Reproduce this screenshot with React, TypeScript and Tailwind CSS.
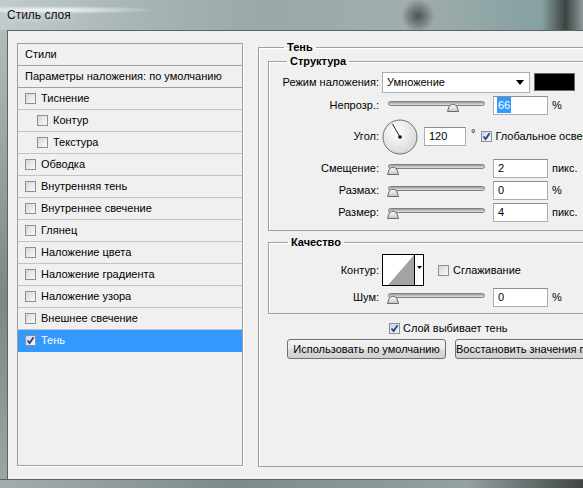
import React from 'react';

const font = "font-['Tahoma','Liberation_Sans',sans-serif]";

const Check = ({ checked }: { checked?: boolean }) => (
  <span
    className={`inline-flex h-[11px] w-[11px] shrink-0 items-center justify-center border border-[#8e8f8f] ${
      checked ? 'bg-[linear-gradient(135deg,#c9d6ea,#f4f7fb)]' : 'bg-[linear-gradient(135deg,#d6d6d6,#fbfbfb)]'
    }`}
  >
    {checked && (
      <svg width="9" height="9" viewBox="0 0 9 9">
        <path d="M1.5 4.5 L3.6 7 L7.6 1.2" fill="none" stroke="#2b3f7c" strokeWidth="1.8" />
      </svg>
    )}
  </span>
);

const Slider = ({ pos }: { pos: number }) => (
  <div className="relative h-[14px] w-[106px] shrink-0">
    <div className="absolute left-[6px] right-[3px] top-[3px] h-[5px] rounded-full border border-[#7f7f7f] bg-[linear-gradient(#9c9c9c,#e2e2e2)]" />
    <svg
      className="absolute top-[5px]"
      style={{ left: 5 + pos * 91 }}
      width="12"
      height="9"
      viewBox="0 0 12 9"
    >
      <defs>
        <linearGradient id="th" x1="0" y1="0" x2="0" y2="1">
          <stop offset="0" stopColor="#ffffff" />
          <stop offset="1" stopColor="#c4c4c4" />
        </linearGradient>
      </defs>
      <path d="M0.5 8.5 L2.2 3.2 Q6 -0.8 9.8 3.2 L11.5 8.5 Z" fill="url(#th)" stroke="#6b6b6b" />
    </svg>
  </div>
);

const Field = ({ value, w = 'w-[55px]', selected }: { value: string; w?: string; selected?: boolean }) => (
  <div className={`flex h-[19px] ${w} shrink-0 items-center border border-[#abadb3] border-t-[#8a8c92] bg-white pl-[3px]`}>
    <span className={selected ? 'bg-[#3399ff] px-[1px] text-white' : 'px-[1px]'}>{value}</span>
  </div>
);

const Label = ({ children }: { children: React.ReactNode }) => (
  <div className="w-[113px] shrink-0 pr-[3px] text-right">{children}</div>
);

const SliderRow = ({ label, pos, value, unit, selected }: { label: string; pos: number; value: string; unit: string; selected?: boolean }) => (
  <div className="flex h-[22px] items-center">
    <Label>{label}</Label>
    <Slider pos={pos} />
    <div className="ml-[5px]">
      <Field value={value} selected={selected} />
    </div>
    <span className="ml-[4px]">{unit}</span>
  </div>
);

const listItems = [
  { label: 'Тиснение' },
  { label: 'Контур', sub: true },
  { label: 'Текстура', sub: true },
  { label: 'Обводка' },
  { label: 'Внутренняя тень' },
  { label: 'Внутреннее свечение' },
  { label: 'Глянец' },
  { label: 'Наложение цвета' },
  { label: 'Наложение градиента' },
  { label: 'Наложение узора' },
  { label: 'Внешнее свечение' },
  { label: 'Тень', active: true },
];

export default function App() {
  return (
    <div className={`${font} flex h-[488px] w-[583px] flex-col overflow-hidden bg-[#8f9a9a] text-[11px] text-black`}>
      {/* title bar */}
      <div className="flex h-[30px] shrink-0 items-center bg-[radial-gradient(circle_at_418px_16px,#4d5252_0,#6f7777_7px,transparent_17px),radial-gradient(ellipse_at_50px_10px,#f4f7f7_0,transparent_110px),linear-gradient(90deg,#c2cbcb_0%,#a9b6b6_22%,#99a8a8_45%,#a1aeae_70%,#86a0a0_93%,#3c4242_97%,#8d9898_100%)] pl-[7px]">
        <span className="text-[12px] text-[#111] [text-shadow:0_0_6px_#fff]">Стиль слоя</span>
      </div>

      <div className="flex min-h-0 flex-1">
        {/* left frame */}
        <div className="w-[7px] shrink-0 bg-[linear-gradient(#b3bcbc,#7b8686_60%,#9aa5a5)]" />

        {/* client area */}
        <div className="flex min-w-0 flex-1 border-l border-t border-[#5b6363] bg-[#f0f0f0] pl-[9px] pt-[12px]">
          {/* styles list */}
          <div className="h-[423px] w-[226px] shrink-0 border border-[#a0a0a0] shadow-[1px_1px_0_#fff]">
            <div className="flex h-[22px] items-center border-b border-[#a0a0a0] pl-[7px]">Стили</div>
            <div className="flex h-[22px] items-center border-b border-[#a0a0a0] pl-[7px]">Параметры наложения: по умолчанию</div>
            {listItems.map((it) => (
              <div
                key={it.label}
                className={`flex h-[22px] items-center gap-[5px] border-b ${
                  it.active ? 'border-[#3399ff] bg-[#3399ff] text-white' : 'border-[#c4c4c4]'
                } ${it.sub ? 'pl-[19px]' : 'pl-[7px]'}`}
              >
                <Check checked={it.active} />
                <span>{it.label}</span>
              </div>
            ))}
          </div>

          {/* right side */}
          <fieldset className="ml-[15px] mt-[-3px] h-[427px] w-[360px] shrink-0 border border-[#a0a0a0] pl-[9px] shadow-[inset_1px_1px_0_#fff]">
            <legend className="ml-[16px] px-[3px] font-bold leading-[14px]">Тень</legend>

            <fieldset className="w-[340px] border border-[#a0a0a0] pb-[7px] shadow-[inset_1px_1px_0_#fff]">
              <legend className="ml-[18px] px-[3px] font-bold leading-[14px]">Структура</legend>

              <div className="mt-[3px] flex h-[22px] items-center">
                <Label>Режим наложения:</Label>
                <div className="flex h-[21px] w-[148px] shrink-0 items-center justify-between border border-[#abadb3] bg-white pl-[4px] pr-[5px]">
                  <span>Умножение</span>
                  <svg width="8" height="5" viewBox="0 0 8 5">
                    <path d="M0 0 H8 L4 5 Z" fill="#000" />
                  </svg>
                </div>
                <div className="ml-[4px] h-[18px] w-[41px] shrink-0 border border-[#6a6a6a] bg-black" />
              </div>

              <div className="mt-[1px]">
                <SliderRow label="Непрозр.:" pos={0.66} value="66" unit="%" selected />
              </div>

              <div className="flex h-[41px] items-center">
                <Label>Угол:</Label>
                <svg width="36" height="36" viewBox="0 0 36 36" className="shrink-0">
                  <defs>
                    <radialGradient id="dial" cx="0.4" cy="0.35" r="0.7">
                      <stop offset="0" stopColor="#ffffff" />
                      <stop offset="1" stopColor="#d6d6d6" />
                    </radialGradient>
                  </defs>
                  <circle cx="18" cy="18" r="17" fill="url(#dial)" stroke="#6f6f6f" />
                  <line x1="18" y1="18" x2="10.5" y2="5" stroke="#222" strokeWidth="1" />
                  <circle cx="18" cy="18" r="1.8" fill="#111" />
                </svg>
                <div className="ml-[6px]">
                  <Field value="120" w="w-[42px]" />
                </div>
                <span className="ml-[5px] -translate-y-[3px]">°</span>
                <div className="ml-[6px] flex items-center gap-[3px] whitespace-nowrap">
                  <Check checked />
                  <span>Глобальное освещение</span>
                </div>
              </div>

              <SliderRow label="Смещение:" pos={0} value="2" unit="пикс." />
              <SliderRow label="Размах:" pos={0} value="0" unit="%" />
              <SliderRow label="Размер:" pos={0} value="4" unit="пикс." />
            </fieldset>

            <fieldset className="mt-[4px] w-[340px] border border-[#a0a0a0] pb-[5px] shadow-[inset_1px_1px_0_#fff]">
              <legend className="ml-[19px] px-[3px] font-bold leading-[14px]">Качество</legend>

              <div className="mt-[5px] flex h-[32px] items-center">
                <Label>Контур:</Label>
                <div className="flex h-[32px] w-[42px] shrink-0 border border-black bg-white">
                  <svg width="31" height="30" viewBox="0 0 31 30" className="shrink-0">
                    <path d="M5 30 L31 0 L31 30 Z" fill="#a3a3a3" />
                  </svg>
                  <div className="flex w-[9px] items-start justify-center border-l border-black pt-[11px]">
                    <svg width="5" height="3" viewBox="0 0 5 3">
                      <path d="M0 0 H5 L2.5 3 Z" fill="#000" />
                    </svg>
                  </div>
                </div>
                <div className="ml-[14px] flex items-center gap-[4px]">
                  <Check />
                  <span>Сглаживание</span>
                </div>
              </div>

              <SliderRow label="Шум:" pos={0} value="0" unit="%" />
            </fieldset>

            <div className="mt-[3px] flex h-[22px] items-center gap-[3px] pl-[121px]">
              <Check checked />
              <span>Слой выбивает тень</span>
            </div>

            <div className="flex gap-[9px] pl-[19px]">
              <button className="h-[20px] w-[159px] shrink-0 rounded-[3px] border border-[#707070] bg-[linear-gradient(#f2f2f2_0%,#ebebeb_50%,#dddddd_51%,#cfcfcf_100%)]">
                Использовать по умолчанию
              </button>
              <button className="h-[20px] w-[170px] shrink-0 rounded-[3px] border border-[#707070] bg-[linear-gradient(#f2f2f2_0%,#ebebeb_50%,#dddddd_51%,#cfcfcf_100%)] whitespace-nowrap">
                Восстановить значения по умолчанию
              </button>
            </div>
          </fieldset>
        </div>
      </div>

      {/* bottom frame */}
      <div className="h-[9px] shrink-0 border-t border-[#5b6363] bg-[linear-gradient(90deg,#a4adad,#7e8a8a_40%,#96a1a1_80%,#3f4545)]" />
    </div>
  );
}
